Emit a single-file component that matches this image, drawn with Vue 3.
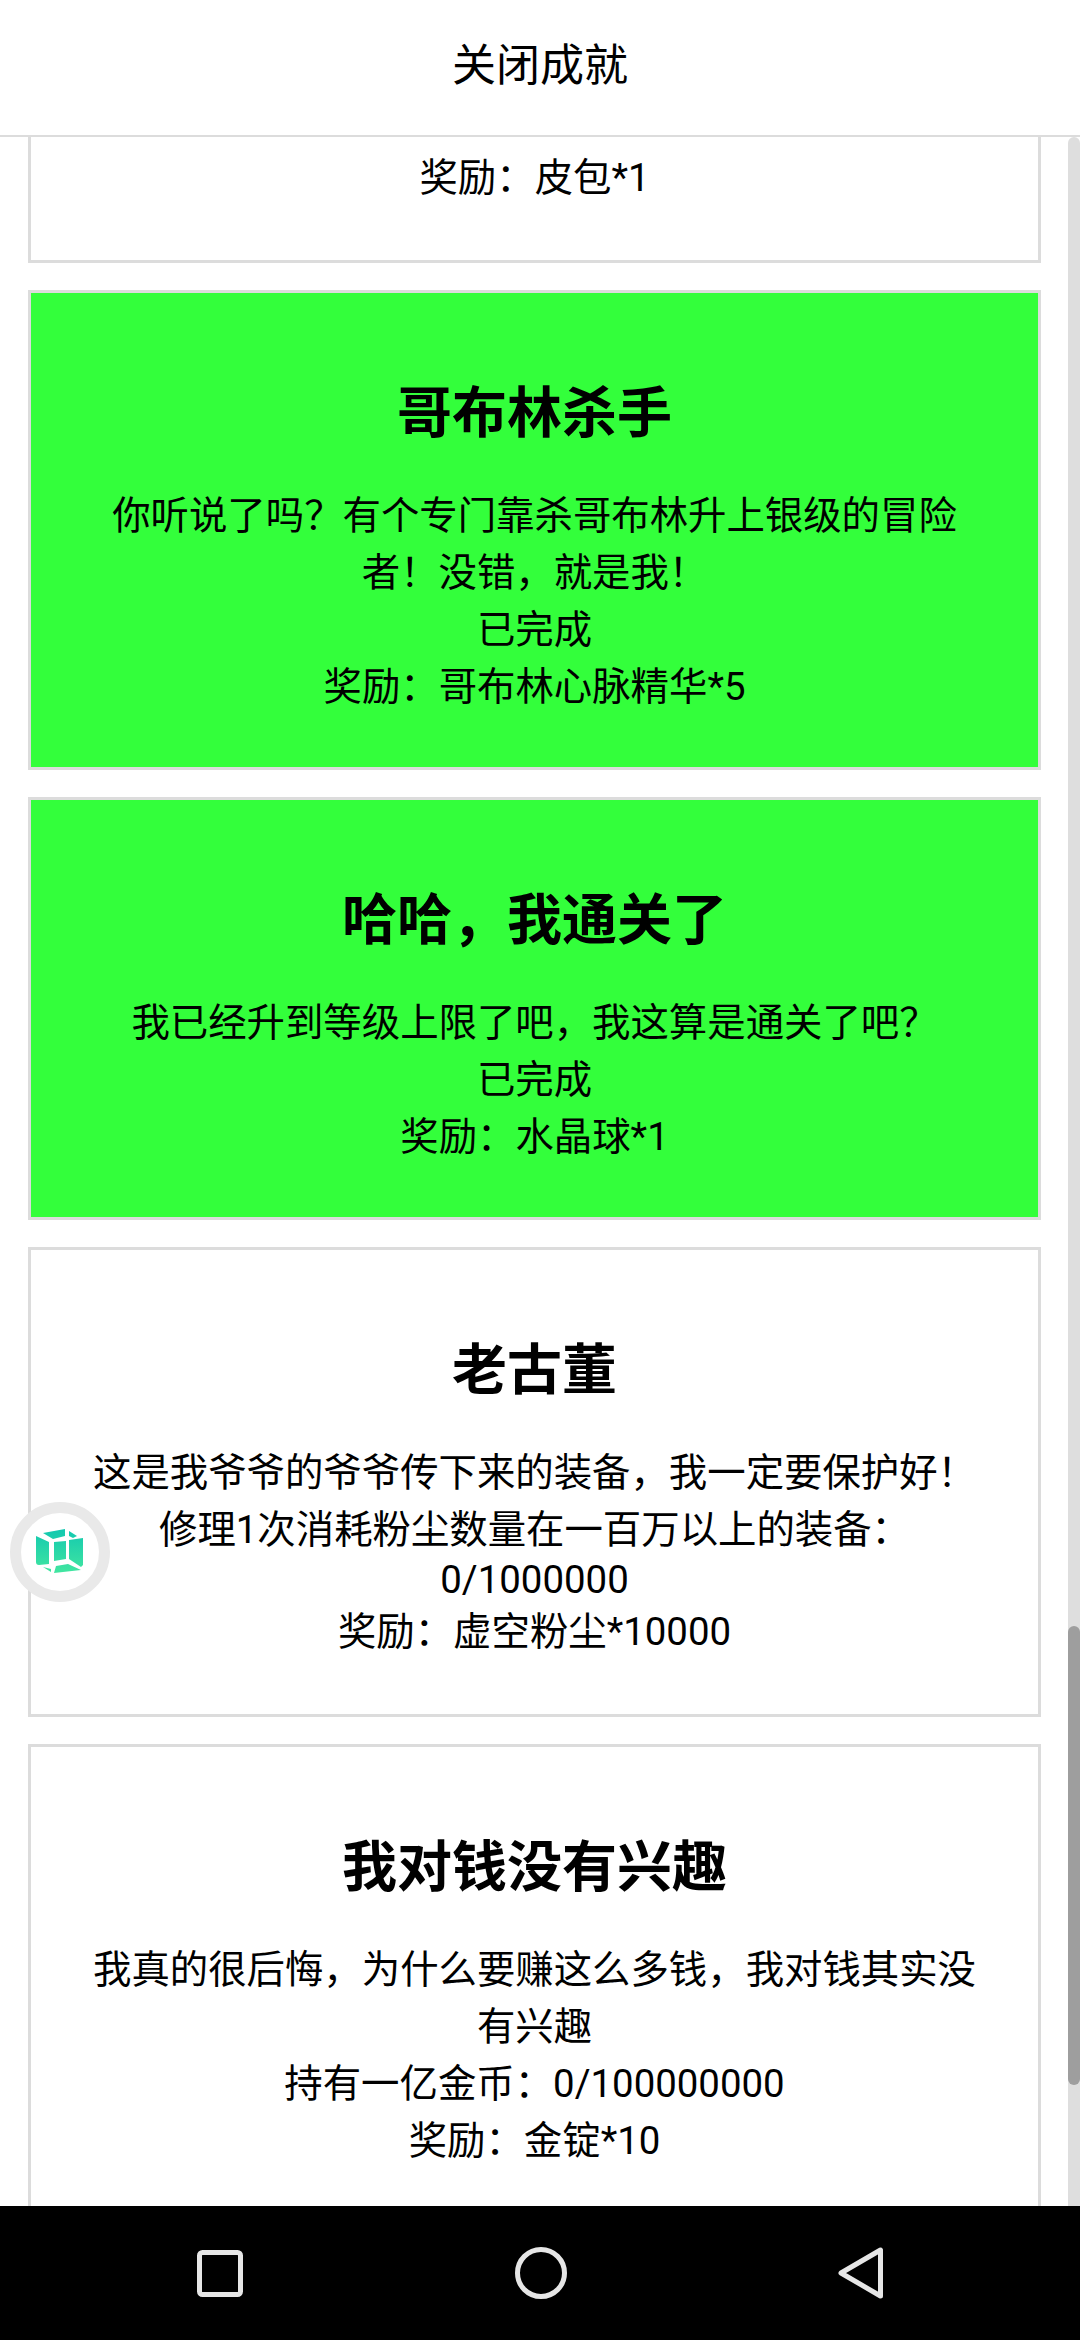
<script setup>
const cards = [
  {
    title: '哥布林杀手',
    done: true,
    lines: [
      { text: '你听说了吗？有个专门靠杀哥布林升上银级的冒险者！没错，就是我！' },
      { text: '已完成' },
      { text: '奖励：哥布林心脉精华*5' },
    ],
  },
  {
    title: '哈哈，我通关了',
    done: true,
    lines: [
      { text: '我已经升到等级上限了吧，我这算是通关了吧？' },
      { text: '已完成' },
      { text: '奖励：水晶球*1' },
    ],
  },
  {
    title: '老古董',
    done: false,
    lines: [
      { text: '这是我爷爷的爷爷传下来的装备，我一定要保护好！' },
      { text: '修理1次消耗粉尘数量在一百万以上的装备：' },
      { text: '0/1000000', latin: true },
      { text: '奖励：虚空粉尘*10000', short: true },
    ],
  },
  {
    title: '我对钱没有兴趣',
    done: false,
    lines: [
      { text: '我真的很后悔，为什么要赚这么多钱，我对钱其实没有兴趣' },
      { text: '持有一亿金币：0/100000000' },
      { text: '奖励：金锭*10' },
    ],
  },
]

// scrollbar thumb
const thumb = { top: 1489, height: 459 }
</script>

<template>
  <div class="screen">
    <header class="top-bar"><span class="top-label">关闭成就</span></header>

    <div class="middle">
      <main class="list">
        <section class="card card-cut">
          <p class="line">奖励：皮包*1</p>
        </section>

        <section v-for="card in cards" :key="card.title" class="card" :class="{ done: card.done }">
          <h2 class="title">{{ card.title }}</h2>
          <p
            v-for="line in card.lines"
            :key="line.text"
            class="line"
            :class="{ latin: line.latin, short: line.short }"
          >{{ line.text }}</p>
        </section>
      </main>

      <div class="scrollbar">
        <div class="thumb" :style="{ marginTop: thumb.top + 'px', height: thumb.height + 'px' }"></div>
      </div>

      <div class="float-ball">
        <svg width="48" height="46" viewBox="0 0 48 46">
          <defs>
            <linearGradient id="cube" x1="0" y1="0" x2="0" y2="1">
              <stop offset="0" stop-color="#12c8b0" />
              <stop offset="1" stop-color="#42e6a0" />
            </linearGradient>
          </defs>
          <path
            fill="url(#cube)"
            d="M7 4 L29 0 L29 7 L17 10 Z
               M33 2 L41 7 L37 9 L33 7 Z
               M0 7 L13 13 L13 35 L3 36 Q0 36 0 33 Z
               M18 13 L30 12 L30 30 L18 32 Z
               M33 11 L47 9 L47 36 L45 38 L33 30 Z
               M7 38 L15 40 L15 43 Z
               M20 37 L32 35 L45 41 L18 44 Z"
          />
        </svg>
      </div>
    </div>

    <nav class="nav-bar">
      <svg width="46" height="47" viewBox="0 0 46 47">
        <rect x="2.5" y="2.5" width="41" height="42" rx="3" fill="none" stroke="#e6e6e6" stroke-width="5" />
      </svg>
      <svg width="52" height="52" viewBox="0 0 52 52">
        <circle cx="26" cy="26" r="23.5" fill="none" stroke="#e6e6e6" stroke-width="5" />
      </svg>
      <svg width="46" height="54" viewBox="0 0 46 54">
        <path d="M42.5 4 L42.5 50 L3 27 Z" fill="none" stroke="#e6e6e6" stroke-width="5" stroke-linejoin="round" />
      </svg>
    </nav>
  </div>
</template>

<style scoped>
.screen {
  position: relative;
  width: 1080px;
  height: 2340px;
  display: flex;
  flex-direction: column;
  overflow: hidden;
  background: #fff;
  color: #000;
  font-family: Roboto, "Noto Sans CJK SC", sans-serif;
}

.top-bar {
  height: 135px;
  flex: none;
  display: flex;
  justify-content: center;
  border-bottom: 2px solid #dcdcdc;
  font-size: 44px;
  line-height: 133px;
}

.middle {
  flex: 1;
  min-height: 0;
  display: flex;
  position: relative;
}

.list {
  flex: 1;
  min-width: 0;
  overflow: hidden;
  padding: 0 27px 0 28px;
  display: flex;
  flex-direction: column;
  gap: 27px;
}

.card {
  flex: none;
  border: 3px solid #dcdcdc;
  padding: 80px 56px 52px;
  text-align: center;
}

.card-cut {
  border-top: 0;
  padding: 12px 56px 54px;
}

.done {
  background: #33ff3b;
}

.title {
  margin: 0 0 34px;
  font-size: 55px;
  line-height: 80px;
  font-weight: 700;
}

.line {
  margin: 0;
  font-size: 38.4px;
  line-height: 57px;
}

.line.latin {
  line-height: 44px;
}

.line.short {
  line-height: 60px;
}

.scrollbar {
  width: 12px;
  flex: none;
  background: #dedede;
  border-radius: 6px 6px 0 0;
}

.thumb {
  background: #9e9e9e;
  border-radius: 6px;
}

.float-ball {
  position: absolute;
  left: 10px;
  top: 1365px;
  width: 100px;
  height: 100px;
  box-sizing: border-box;
  border: 11px solid #e9e9e9;
  border-radius: 50%;
  background: #fff;
  display: flex;
  align-items: center;
  justify-content: center;
}

.nav-bar {
  height: 134px;
  flex: none;
  background: #000;
  display: flex;
  align-items: center;
  justify-content: space-between;
  padding: 0 196px 0 197px;
}
</style>

<style>
html, body {
  margin: 0;
  background: #fff;
}
</style>
